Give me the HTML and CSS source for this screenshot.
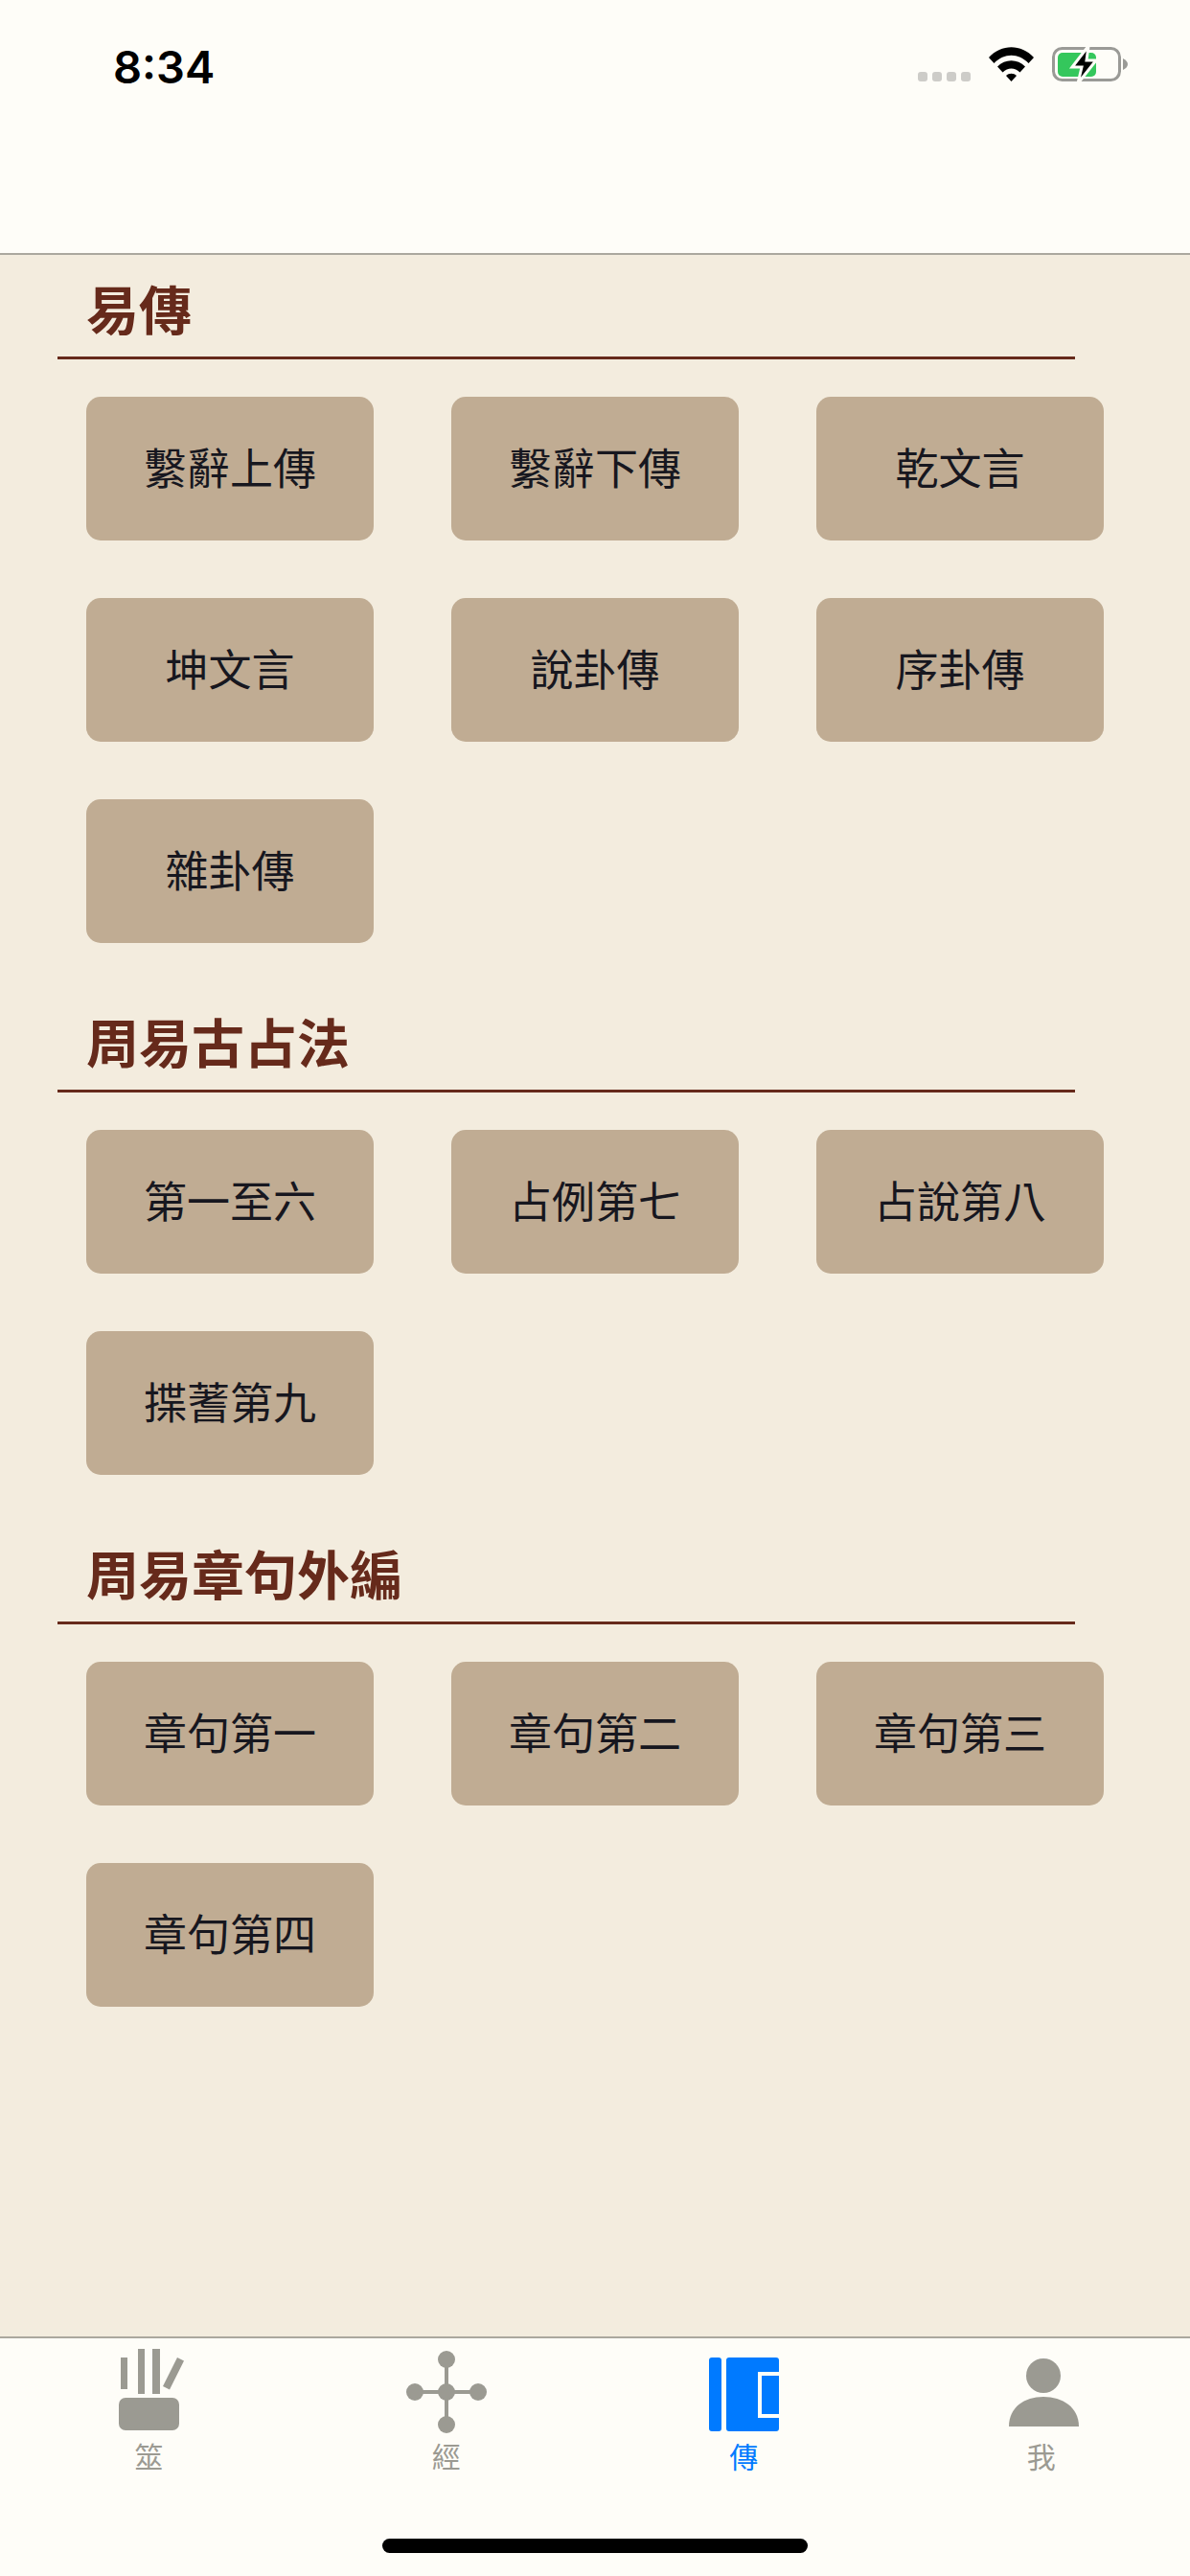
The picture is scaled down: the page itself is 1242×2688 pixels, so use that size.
FILE: index.html
```html
<!DOCTYPE html>
<html lang="zh-Hant">
<head>
    <meta charset="UTF-8">
    <meta name="viewport" content="width=device-width, initial-scale=1.0">
    <title>傳</title>
    <link rel="stylesheet" href="styles.css">
</head>
<body>
    <div class="app">
        <header class="top-bar">
            <div class="status-bar">
                <span class="time">8:34</span>
                <div class="status-icons">
                    <div class="signal"><span></span><span></span><span></span><span></span></div>
                    <svg class="wifi" width="47" height="36" viewBox="0 0 47 36">
                        <path d="M0 11 C13 -3.500 34 -3.500 47 11 L41.500 17 C31 6 16 6 5.500 17 Z" fill="#000"/>
                        <path d="M9 20.500 C17 12 30 12 38 20.500 L32.500 26.500 C27 21 20 21 14.500 26.500 Z" fill="#000"/>
                        <path d="M18 30 C21 27 26 27 29 30 L23.500 36 Z" fill="#000"/>
                    </svg>
                    <svg class="battery" width="79" height="36" viewBox="0 0 79 36">
                        <rect x="1.500" y="1.500" width="69" height="33" rx="9" fill="none" stroke="#9a9a96" stroke-width="3"/>
                        <path d="M74 12 C77 13.500 79 15.500 79 18 C79 20.500 77 22.500 74 24 Z" fill="#9a9a96"/>
                        <rect x="6" y="6" width="40" height="25" rx="5" fill="#34c75c"/>
                        <path d="M38 -1 L21 21 L31 21 L27 38 L46 14 L36 14 Z" fill="#000" stroke="#fefdf8" stroke-width="3"/>
                    </svg>
                </div>
            </div>
        </header>

        <main class="content">
            <section class="group">
                <h2 class="group-title">易傳</h2>
                <div class="chapter-grid">
                    <a href="#" class="chapter-btn">繫辭上傳</a>
                    <a href="#" class="chapter-btn">繫辭下傳</a>
                    <a href="#" class="chapter-btn">乾文言</a>
                    <a href="#" class="chapter-btn">坤文言</a>
                    <a href="#" class="chapter-btn">說卦傳</a>
                    <a href="#" class="chapter-btn">序卦傳</a>
                    <a href="#" class="chapter-btn">雜卦傳</a>
                </div>
            </section>

            <section class="group">
                <h2 class="group-title">周易古占法</h2>
                <div class="chapter-grid">
                    <a href="#" class="chapter-btn">第一至六</a>
                    <a href="#" class="chapter-btn">占例第七</a>
                    <a href="#" class="chapter-btn">占說第八</a>
                    <a href="#" class="chapter-btn">揲蓍第九</a>
                </div>
            </section>

            <section class="group">
                <h2 class="group-title">周易章句外編</h2>
                <div class="chapter-grid">
                    <a href="#" class="chapter-btn">章句第一</a>
                    <a href="#" class="chapter-btn">章句第二</a>
                    <a href="#" class="chapter-btn">章句第三</a>
                    <a href="#" class="chapter-btn">章句第四</a>
                </div>
            </section>
        </main>

        <footer class="tab-bar">
            <nav class="tabs">
                <a href="#" class="tab">
                    <svg class="tab-icon" viewBox="0 0 90 90">
                        <rect x="16" y="9" width="7" height="33"/>
                        <rect x="34" y="0" width="7" height="47"/>
                        <rect x="49" y="0" width="8" height="47"/>
                        <path d="M75 9 L82 12.500 L67 42.500 L60 39 Z"/>
                        <rect x="14" y="51" width="63" height="34" rx="7"/>
                    </svg>
                    <span class="tab-label">筮</span>
                </a>
                <a href="#" class="tab">
                    <svg class="tab-icon" viewBox="0 0 90 90">
                        <path d="M45 11 V79 M12 45 H78" fill="none" stroke="#9b9a92" stroke-width="4"/>
                        <circle cx="45" cy="11" r="9"/>
                        <circle cx="12" cy="45" r="9"/>
                        <circle cx="45" cy="45" r="9"/>
                        <circle cx="78" cy="45" r="9"/>
                        <circle cx="45" cy="79" r="9"/>
                    </svg>
                    <span class="tab-label">經</span>
                </a>
                <a href="#" class="tab active">
                    <svg class="tab-icon" viewBox="0 0 90 90">
                        <rect x="9" y="9" width="13" height="77" rx="3"/>
                        <path d="M30 9 H79 a3 3 0 0 1 3 3 V24 H60 V72 H82 V83 a3 3 0 0 1 -3 3 H30 a3 3 0 0 1 -3 -3 V12 a3 3 0 0 1 3 -3 Z"/>
                        <rect x="64" y="28" width="18" height="40"/>
                    </svg>
                    <span class="tab-label">傳</span>
                </a>
                <a href="#" class="tab">
                    <svg class="tab-icon" viewBox="0 0 90 90">
                        <circle cx="47" cy="28" r="18"/>
                        <path d="M11 81 C11 61 27 50 47 50 C67 50 84 61 84 81 Z"/>
                    </svg>
                    <span class="tab-label">我</span>
                </a>
            </nav>
            <div class="home-indicator"></div>
        </footer>
    </div>
</body>
</html>
```
FILE: styles.css
```css
/* General */
body, html {
    margin: 0;
    padding: 0;
    font-family: "Noto Sans CJK TC", "Liberation Sans", sans-serif;
    background-color: #f3ecde;
}

a {
    text-decoration: none;
}

.app {
    width: 1242px;
    height: 2688px;
    display: flex;
    flex-direction: column;
    overflow: hidden;
}

/* Top bar */
.top-bar {
    height: 264px;
    background-color: #fefdf8;
    border-bottom: 2px solid #aba89e;
}

.status-bar {
    display: flex;
    justify-content: space-between;
    align-items: flex-end;
    padding: 49px 65px 0 118px;
    height: 36px;
}

.time {
    font-family: Inter, "Liberation Sans", sans-serif;
    font-size: 47px;
    font-weight: 600;
    line-height: 36px;
    margin-bottom: -3px;
    color: #000;
}

.status-icons {
    display: flex;
    align-items: flex-end;
    gap: 19px;
}

.signal {
    display: flex;
    gap: 5px;
}

.signal span {
    width: 10px;
    height: 10px;
    border-radius: 3px;
    background-color: #cdccc8;
}

.wifi, .battery {
    display: block;
    overflow: visible;
}

/* Chapter groups */
.content {
    flex: 1;
    padding-left: 60px;
}

.group {
    margin-bottom: 47px;
}

.group-title {
    width: 1032px;
    margin: 0;
    padding: 15px 0 13px 30px;
    border-bottom: 3px solid #662a1b;
    font-size: 55px;
    font-weight: 700;
    line-height: 78px;
    color: #662a1b;
}

.chapter-grid {
    display: grid;
    grid-template-columns: repeat(3, 300px);
    column-gap: 81px;
    row-gap: 60px;
    padding: 39px 0 0 30px;
}

.chapter-btn {
    height: 144px;
    padding-bottom: 6px;
    display: flex;
    align-items: center;
    justify-content: center;
    background-color: #c0ac93;
    border-radius: 15px;
    font-size: 45px;
    color: #17171f;
}

/* Tab bar */
.tab-bar {
    background-color: #fefdf8;
    border-top: 2px solid #aba89e;
    display: flex;
    flex-direction: column;
    align-items: center;
    padding: 11px 0 24px;
}

.tabs {
    display: grid;
    grid-template-columns: repeat(4, 1fr);
    width: 100%;
}

.tab {
    display: flex;
    flex-direction: column;
    align-items: center;
    color: #9b9a92;
    fill: #9b9a92;
}

.tab.active {
    color: #007aff;
    fill: #007aff;
}

.tab-icon {
    width: 90px;
    height: 90px;
    display: block;
}

.tab-label {
    font-size: 30px;
    line-height: 42px;
}

.home-indicator {
    width: 444px;
    height: 15px;
    margin-top: 66px;
    border-radius: 8px;
    background-color: #000;
}
```
